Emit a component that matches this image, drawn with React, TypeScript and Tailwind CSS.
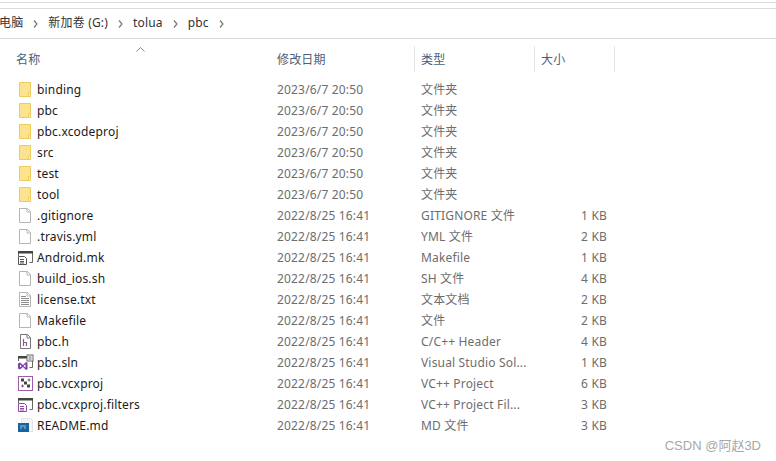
const FONT = "font-['Noto_Sans','Noto_Sans_CJK_SC',sans-serif]";

type Kind = "folder" | "blank" | "mk" | "text" | "h" | "sln" | "vcx" | "filters" | "md";

const FILES: { name: string; date: string; type: string; size: string; icon: Kind }[] = [
  { name: "binding", date: "2023/6/7 20:50", type: "文件夹", size: "", icon: "folder" },
  { name: "pbc", date: "2023/6/7 20:50", type: "文件夹", size: "", icon: "folder" },
  { name: "pbc.xcodeproj", date: "2023/6/7 20:50", type: "文件夹", size: "", icon: "folder" },
  { name: "src", date: "2023/6/7 20:50", type: "文件夹", size: "", icon: "folder" },
  { name: "test", date: "2023/6/7 20:50", type: "文件夹", size: "", icon: "folder" },
  { name: "tool", date: "2023/6/7 20:50", type: "文件夹", size: "", icon: "folder" },
  { name: ".gitignore", date: "2022/8/25 16:41", type: "GITIGNORE 文件", size: "1 KB", icon: "blank" },
  { name: ".travis.yml", date: "2022/8/25 16:41", type: "YML 文件", size: "2 KB", icon: "blank" },
  { name: "Android.mk", date: "2022/8/25 16:41", type: "Makefile", size: "1 KB", icon: "mk" },
  { name: "build_ios.sh", date: "2022/8/25 16:41", type: "SH 文件", size: "4 KB", icon: "blank" },
  { name: "license.txt", date: "2022/8/25 16:41", type: "文本文档", size: "2 KB", icon: "text" },
  { name: "Makefile", date: "2022/8/25 16:41", type: "文件", size: "2 KB", icon: "blank" },
  { name: "pbc.h", date: "2022/8/25 16:41", type: "C/C++ Header", size: "4 KB", icon: "h" },
  { name: "pbc.sln", date: "2022/8/25 16:41", type: "Visual Studio Sol...", size: "1 KB", icon: "sln" },
  { name: "pbc.vcxproj", date: "2022/8/25 16:41", type: "VC++ Project", size: "6 KB", icon: "vcx" },
  { name: "pbc.vcxproj.filters", date: "2022/8/25 16:41", type: "VC++ Project Fil...", size: "3 KB", icon: "filters" },
  { name: "README.md", date: "2022/8/25 16:41", type: "MD 文件", size: "3 KB", icon: "md" },
];

function Page({ children }: { children?: React.ReactNode }) {
  return (
    <>
      <path d="M2.5 1.5h8l3 3v11h-11z" fill="#fff" stroke="#b4b4b4" />
      <path d="M10 1.5v3.5h3.5" fill="none" stroke="#b4b4b4" />
      {children}
    </>
  );
}

function WindowFrame({ color }: { color: string }) {
  return (
    <>
      <path d="M1.5 7V2.5h14v11h-3" fill="#fff" stroke="#666" />
      <rect x="1" y="2" width="15" height="2.5" fill={color} />
    </>
  );
}

function FileIcon({ kind }: { kind: Kind }) {
  return (
    <svg width="17" height="17" viewBox="0 0 17 17" className="shrink-0">
      {kind === "folder" && (
        <>
          <path d="M2.5 1.5h11v14h-11z" fill="#fde38f" stroke="#eecb5f" />
          <path d="M11.5 15.5v-4h2v4z" fill="#fff2c4" stroke="#eecb5f" />
        </>
      )}
      {kind === "blank" && <Page />}
      {kind === "text" && (
        <Page>
          <path d="M4 5.5h5M4 7.5h8M4 9.5h8M4 11.5h8M4 13.5h8" stroke="#8a8a8a" />
        </Page>
      )}
      {kind === "h" && (
        <>
          <path d="M3.5 1.5h7l3 3v11h-10z" fill="#fff" stroke="#777" />
          <path d="M10 1.5v3.5h3.5" fill="none" stroke="#777" />
          <path d="M6.5 6v7M6.5 9.5h3v3.5" fill="none" stroke="#8c5a96" strokeWidth="1.2" />
        </>
      )}
      {kind === "mk" && (
        <>
          <WindowFrame color="#444" />
          <path d="M1.5 7.5h6l2 2v6h-8z" fill="#fff" stroke="#555" />
          <path d="M3 10.5h4M3 12.5h4M3 14h4" stroke="#555" />
        </>
      )}
      {kind === "filters" && (
        <>
          <WindowFrame color="#444" />
          <path d="M1.5 7.5h6l2 2v6h-8z" fill="#fff" stroke="#8f4a9e" />
          <path d="M3 10.5h4M3 12.5h4M3 14h4" stroke="#8f4a9e" />
        </>
      )}
      {kind === "sln" && (
        <>
          <WindowFrame color="#444" />
          <rect x="10" y="1" width="6" height="6" fill="#fff" stroke="#666" />
          <path d="M11.5 3h3M11.5 5h3" stroke="#666" />
          <path d="M1 9.5l2-1 3 2.5 3-3 1.5.8v6.4l-1.5.8-3-3-3 2.5-2-1z" fill="#7b3fa8" />
          <path d="M3 10.5v3l1.7-1.5zM8.5 10.3v3.4l-2-1.7z" fill="#fff" />
        </>
      )}
      {kind === "vcx" && (
        <>
          <rect x="1.5" y="1.5" width="14" height="14" fill="#fff" stroke="#a05aa8" />
          <path d="M4 3.5h3v3h-3zM7 6.5h3v3h-3zM10 9.5h3v3h-3z" fill="#444" />
          <path d="M10.5 5h3M12 3.5v3M4 11h3M5.5 9.5v3" stroke="#666" />
        </>
      )}
      {kind === "md" && (
        <>
          <path d="M4.5 1.5h9l2 2v11h-11z" fill="#f4f4f4" stroke="#e4e4e4" />
          <rect x="1" y="6" width="11" height="9" fill="#17639f" />
          <path d="M3 9h6M3 11h2M7 11h2" stroke="#9cc4e4" />
        </>
      )}
    </svg>
  );
}

function HeaderCell({ label, width }: { label: string; width: string }) {
  return (
    <div className={`${width} flex h-full items-center border-r border-[#e5e5e5] pl-[6px] pt-[2px]`}>
      {label}
    </div>
  );
}

function Crumb({ label }: { label: string }) {
  return (
    <>
      <span>{label}</span>
      <svg width="5" height="8" viewBox="0 0 5 8" className="mx-[10px] mt-[2px]">
        <path d="M1 0.5l3 3.5-3 3.5" fill="none" stroke="#777" strokeWidth="1.2" />
      </svg>
    </>
  );
}

export default function App() {
  return (
    <div className={`${FONT} relative h-[461px] w-[776px] overflow-hidden bg-white text-[12px] leading-none tracking-[0.17px]`}>
      <div className="mt-[2px] h-px bg-[#dcdcdc]" />
      <div className="mt-[5px] h-px bg-[#dcdcdc]" />
      <div className="flex h-[30px] items-center border-b border-[#dcdcdc] pb-[1px] text-[#333]">
        <div className="ml-[-1px] flex items-center">
          <Crumb label="电脑" />
          <Crumb label="新加卷 (G:)" />
          <Crumb label="tolua" />
          <Crumb label="pbc" />
        </div>
      </div>

      <div className="relative mt-[7px] flex h-[26px] items-center text-[#4c607a]">
        <div className="w-[271px] pl-[16px] pt-[2px]">名称</div>
        <svg width="9" height="5" viewBox="0 0 9 5" className="absolute left-[136px] top-[1px]">
          <path d="M0.5 4.5l4-4 4 4" fill="none" stroke="#888" />
        </svg>
        <HeaderCell label="修改日期" width="w-[144px]" />
        <HeaderCell label="类型" width="w-[120px]" />
        <HeaderCell label="大小" width="w-[80px]" />
      </div>

      <div className="mt-[7px]">
        {FILES.map((f) => (
          <div key={f.name} className="flex h-[21px] items-center text-[#6d6d6d]">
            <div className="flex w-[277px] items-center pl-[17px] text-[#1a1a1a]">
              <FileIcon kind={f.icon} />
              <span className="ml-[3px]">{f.name}</span>
            </div>
            <div className="w-[144px]">{f.date}</div>
            <div className="w-[120px] whitespace-nowrap">{f.type}</div>
            <div className="w-[66px] text-right">{f.size}</div>
          </div>
        ))}
      </div>

      <div className="absolute right-[15px] top-[439px] font-['Liberation_Sans','Noto_Sans_CJK_SC',sans-serif] text-[13px] tracking-normal text-[#a8a8a8]">
        CSDN @阿赵3D
      </div>
    </div>
  );
}
